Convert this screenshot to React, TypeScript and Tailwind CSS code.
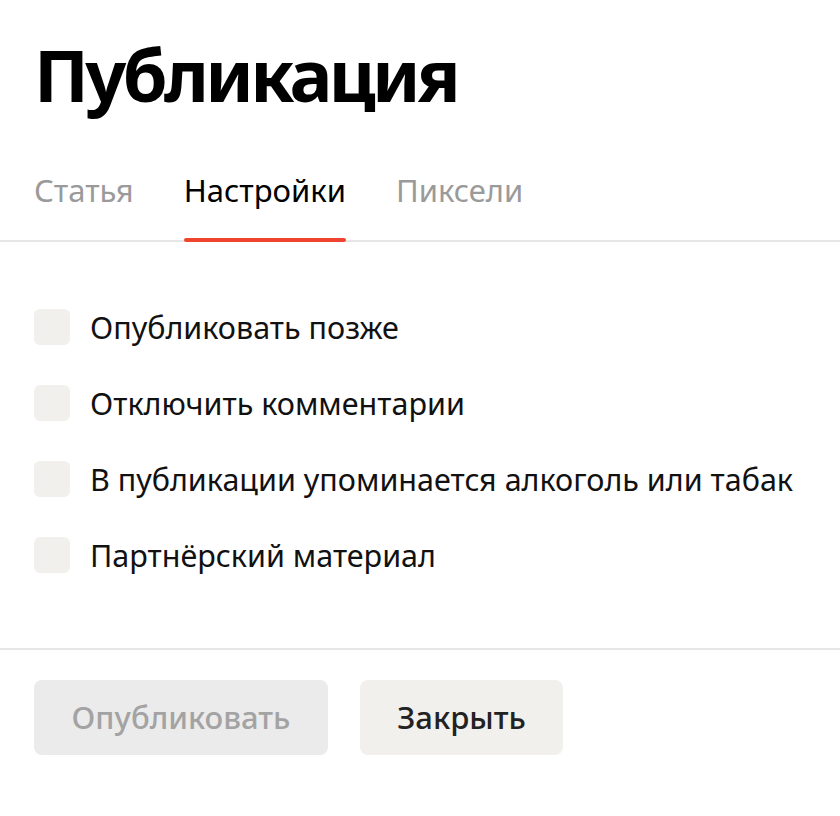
import { useState } from "react";

const tabs = ["Статья", "Настройки", "Пиксели"];
const options = [
  "Опубликовать позже",
  "Отключить комментарии",
  "В публикации упоминается алкоголь или табак",
  "Партнёрский материал",
];

const App = () => {
  const [active, setActive] = useState(1);
  const [checked, setChecked] = useState<boolean[]>([false, false, false, false]);

  return (
    <div className="min-h-screen w-[840px] bg-white text-black" style={{ fontFamily: '"Noto Sans", "Open Sans", sans-serif' }}>
      <div className="px-[34px] pt-[30px]">
        <h1 className="text-[72px] font-bold leading-[88px] tracking-[-3.6px]">Публикация</h1>
      </div>

      {/* Tabs */}
      <div className="mt-[52px] flex gap-[50px] border-b-2 border-[#e6e6e6] px-[34px]">
        {tabs.map((t, i) => (
          <button
            key={t}
            onClick={() => setActive(i)}
            className={`relative pb-[30px] text-[31px] leading-[40px] ${active === i ? "text-black" : "text-[#9a9a9a]"}`}
          >
            {t}
            {active === i && (
              <span className="absolute -bottom-[2px] left-0 h-[4px] w-full rounded-full bg-[#ee4530]" />
            )}
          </button>
        ))}
      </div>

      {/* Options */}
      <div className="flex flex-col gap-[40px] px-[34px] pt-[67px] pb-[75px]">
        {options.map((o, i) => (
          <label key={o} className="flex cursor-pointer items-center gap-[20px]">
            <span
              onClick={() => setChecked(checked.map((c, j) => (j === i ? !c : c)))}
              className="h-[36px] w-[36px] shrink-0 rounded-[6px] bg-[#f1f0ed]"
            />
            <span className="text-[30.5px] leading-[36px] text-[#111]">{o}</span>
          </label>
        ))}
      </div>

      {/* Footer */}
      <div className="flex gap-[32px] border-t-2 border-[#e6e6e6] px-[34px] pt-[30px]">
        <button className="h-[75px] w-[294px] rounded-[8px] bg-[#ebebeb] text-[31px] font-medium text-[#a3a3a3]">
          Опубликовать
        </button>
        <button className="h-[75px] w-[203px] rounded-[8px] bg-[#f1f0ed] text-[31px] font-medium text-[#222]">
          Закрыть
        </button>
      </div>
    </div>
  );
};

export default App;
